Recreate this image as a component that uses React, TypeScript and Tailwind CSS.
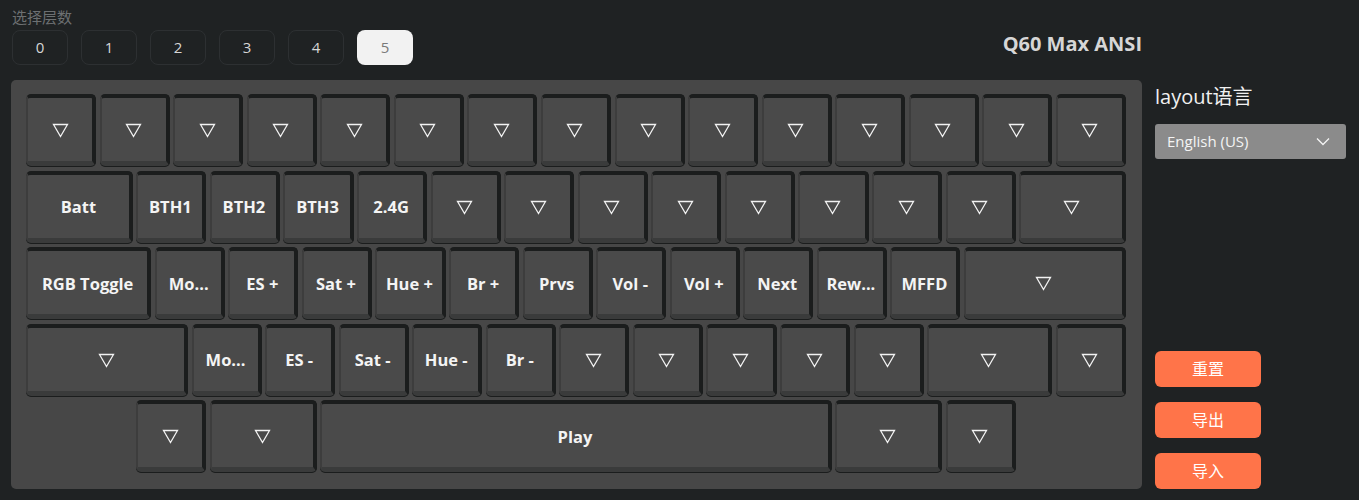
import React from "react";

type K = { l?: string; w?: number; start?: boolean };

const SPAN: Record<string, string> = {
  "1": "col-span-4",
  "1.5": "col-span-6",
  "1.75": "col-span-7",
  "2.25": "col-span-9",
  "7": "col-span-28",
};

const T = (w = 1, start = false): K => ({ w, start });
const L = (l: string, w = 1): K => ({ l, w });

const rows: K[][] = [
  Array.from({ length: 15 }, () => T()),
  [L("Batt", 1.5), L("BTH1"), L("BTH2"), L("BTH3"), L("2.4G"), ...Array.from({ length: 8 }, () => T()), T(1.5)],
  [
    L("RGB Toggle", 1.75),
    L("Mo..."),
    L("ES +"),
    L("Sat +"),
    L("Hue +"),
    L("Br +"),
    L("Prvs"),
    L("Vol -"),
    L("Vol +"),
    L("Next"),
    L("Rew..."),
    L("MFFD"),
    T(2.25),
  ],
  [T(2.25), L("Mo..."), L("ES -"), L("Sat -"), L("Hue -"), L("Br -"), ...Array.from({ length: 5 }, () => T()), T(1.75), T()],
  [T(1, true), T(1.5), L("Play", 7), T(1.5), T()],
];

function Tri() {
  return (
    <svg width="17" height="15" viewBox="0 0 17 15" fill="none" className="mt-[2px]">
      <path d="M1.5 1.5 H15.5 L8.5 13.5 Z" stroke="#f2f2f2" strokeWidth="1.3" strokeLinejoin="miter" />
    </svg>
  );
}

function Key({ k }: { k: K }) {
  const span = SPAN[String(k.w ?? 1)];
  return (
    <div
      className={`${span} ${k.start ? "col-start-7" : ""} h-[72px] rounded-[5px] bg-[#4a4a4a] border-t-[4px] border-r-[4px] border-l-[2px] border-b-[5px] border-t-[#1b1d1d] border-r-[#1b1d1d] border-l-[#3d3d3d] border-b-[#3a3b3b] shadow-[0_1px_0_#1b1d1d] flex items-center justify-center overflow-hidden`}
    >
      {k.l ? (
        <span className="text-[16.5px] font-bold text-[#f4f4f4] whitespace-nowrap mt-[3px]">{k.l}</span>
      ) : (
        <Tri />
      )}
    </div>
  );
}

export default function App() {
  const font = { fontFamily: '"Open Sans", "Noto Sans CJK SC", sans-serif' };
  return (
    <div className="w-[1359px] h-[500px] bg-[#1f2223] overflow-hidden" style={font}>
      <div className="flex pl-[11px] gap-[13px]">
        <div className="w-[1131px] flex flex-col">
          <div className="flex justify-between items-end">
            <div className="flex flex-col pl-[1px]">
              <div className="pt-[7px] text-[15px] leading-[20px] text-[#6d7072]">选择层数</div>
              <div className="flex gap-[13px] mt-[3px]">
                {[0, 1, 2, 3, 4, 5].map((n) => (
                  <div
                    key={n}
                    className={
                      n === 5
                        ? "w-[56px] h-[35px] rounded-[8px] bg-[#f2f2f2] text-[#7a7a7a] text-[15px] flex items-center justify-center"
                        : "w-[56px] h-[35px] rounded-[8px] border border-[#2d3032] text-[#d6d6d6] text-[15px] flex items-center justify-center"
                    }
                  >
                    {n}
                  </div>
                ))}
              </div>
            </div>
            <div className="text-[20px] font-bold text-[#d6d6d6] leading-[24px] mb-[9px]">Q60 Max ANSI</div>
          </div>
          <div className="mt-[15px] h-[409px] bg-[#474747] rounded-[5px] pl-[15px] pr-[16px] pt-[14px] pb-[17px] flex flex-col gap-[4.5px]">
            {rows.map((r, i) => (
              <div key={i} className="grid grid-cols-[repeat(60,minmax(0,1fr))] gap-x-[3.5px]">
                {r.map((k, j) => (
                  <Key key={j} k={k} />
                ))}
              </div>
            ))}
          </div>
        </div>
        <div className="w-[191px] h-[489px] flex flex-col pt-[85px]">
          <div className="text-[20px] leading-[24px] text-[#f0f0f0]">layout语言</div>
          <div className="mt-[15px] h-[35px] rounded-[3px] bg-[#8b8b8b] flex items-center justify-between pl-[12px] pr-[16px]">
            <span className="text-[15px] text-[#f4f4f4]">English (US)</span>
            <svg width="14" height="9" viewBox="0 0 14 9" fill="none">
              <path d="M1 1.5 L7 7.5 L13 1.5" stroke="#f4f4f4" strokeWidth="1.3" />
            </svg>
          </div>
          <div className="mt-auto flex flex-col gap-[15px]">
            {["重置", "导出", "导入"].map((t) => (
              <div
                key={t}
                className="w-[106px] h-[36px] rounded-[6px] bg-[#ff7449] text-white text-[16px] flex items-center justify-center"
              >
                {t}
              </div>
            ))}
          </div>
        </div>
      </div>
    </div>
  );
}
